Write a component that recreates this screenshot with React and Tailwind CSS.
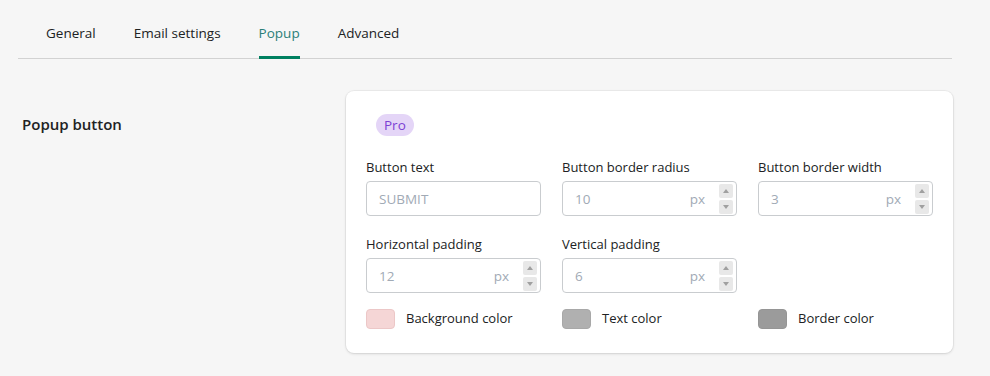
import React from "react";

const font = { fontFamily: '"Open Sans", "Noto Sans", sans-serif' };

function Spinner() {
  return (
    <div className="flex flex-col gap-[2px]">
      <div className="w-[14px] h-[14px] bg-[#e8e8e8] rounded-[2px] flex items-center justify-center">
        <svg width="6" height="4" viewBox="0 0 6 4"><path d="M0 4 L3 0 L6 4 Z" fill="#a0a0a0" /></svg>
      </div>
      <div className="w-[14px] h-[14px] bg-[#e8e8e8] rounded-[2px] flex items-center justify-center">
        <svg width="6" height="4" viewBox="0 0 6 4"><path d="M0 0 L3 4 L6 0 Z" fill="#a0a0a0" /></svg>
      </div>
    </div>
  );
}

function Field({ label, value, unit }) {
  return (
    <div className="flex flex-col">
      <div className="text-[13px] text-[#202223] leading-[18px] mb-[5px]">{label}</div>
      <div className="h-[35px] border border-[#c9cccf] rounded-[4px] bg-white flex items-center pl-[12px] pr-[3px]">
        <span className="text-[13.5px] text-[#a1aab5] flex-1">{value}</span>
        {unit && <span className="text-[13.5px] text-[#a1aab5] mr-[14px]">{unit}</span>}
        {unit && <Spinner />}
      </div>
    </div>
  );
}

function Swatch({ color, border, label }) {
  return (
    <div className="flex items-center">
      <div className={`w-[29px] h-[20px] rounded-[4px] border ${border}`} style={{ backgroundColor: color }} />
      <span className="ml-[11px] text-[13px] text-[#202223]">{label}</span>
    </div>
  );
}

export default function App() {
  return (
    <div className="w-[990px] h-[376px] bg-[#f6f6f6] overflow-hidden" style={font}>
      <div className="pt-[20px] pl-[18px] w-[952px]">
        <div className="flex border-b border-[#d2d2d2] h-[39px]">
          <div className="pl-[28px] pr-[38px] text-[13.5px] text-[#202223] leading-[26px]">General</div>
          <div className="pr-[38px] text-[13.5px] text-[#202223] leading-[26px]">Email settings</div>
          <div className="pr-[38px] flex">
            <div className="text-[13.5px] text-[#2b7f78] leading-[26px] border-b-[3px] border-[#008060] h-[39px] -mb-[1px]">Popup</div>
          </div>
          <div className="text-[13.5px] text-[#202223] leading-[26px]">Advanced</div>
        </div>
      </div>
      <div className="flex pt-[32px]">
        <div className="w-[346px] pl-[22px] pt-[22px] text-[15px] font-semibold text-[#202223]">Popup button</div>
        <div className="w-[607px] bg-white rounded-[8px] shadow-[0_0_0_1px_rgba(0,0,0,0.04),0_1px_3px_rgba(0,0,0,0.12)] pt-[21px] pl-[20px] pr-[20px] pb-[24px]">
          <div className="ml-[10px] inline-flex items-center h-[22px] px-[8px] rounded-full bg-[#e4d5f7] text-[#7c3fd4] text-[13.5px]">Pro</div>
          <div className="grid grid-cols-3 gap-x-[21px] gap-y-[19px] mt-[22px]">
            <Field label="Button text" value="SUBMIT" />
            <Field label="Button border radius" value="10" unit="px" />
            <Field label="Button border width" value="3" unit="px" />
            <Field label="Horizontal padding" value="12" unit="px" />
            <Field label="Vertical padding" value="6" unit="px" />
            <div />
          </div>
          <div className="grid grid-cols-3 gap-x-[21px] mt-[16px]">
            <Swatch color="#f5d6d6" border="border-[#ecc7c7]" label="Background color" />
            <Swatch color="#b0b0b0" border="border-[#a8a8a8]" label="Text color" />
            <Swatch color="#9b9b9b" border="border-[#959595]" label="Border color" />
          </div>
        </div>
      </div>
    </div>
  );
}
